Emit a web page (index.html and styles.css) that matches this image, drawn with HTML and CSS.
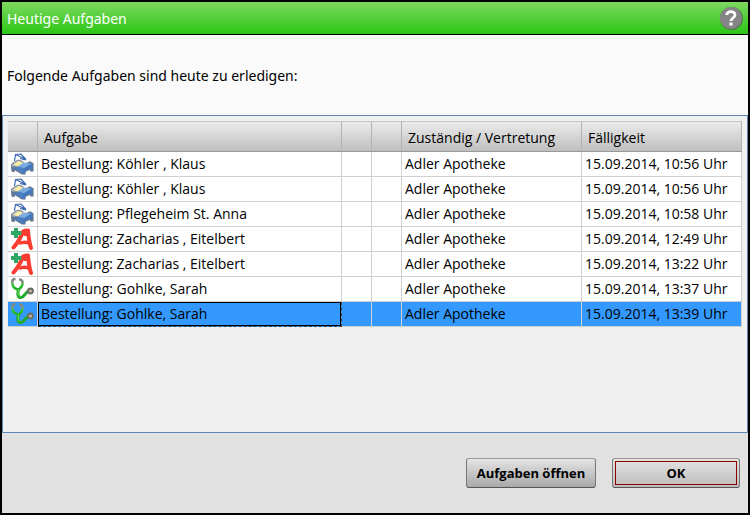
FILE: index.html
```html
<!DOCTYPE html>
<html lang="de">
<head>
<meta charset="UTF-8">
<meta name="viewport" content="width=device-width, initial-scale=1.0">
<title>Heutige Aufgaben</title>
<link rel="stylesheet" href="styles.css">
</head>
<body>
<svg class="icon-defs" aria-hidden="true">
<defs>
<linearGradient id="tube" x1="0" y1="0" x2="0" y2="1">
<stop offset="0" stop-color="#7f847f"/>
<stop offset="0.35" stop-color="#7d9a7d"/>
<stop offset="0.6" stop-color="#2fc832"/>
<stop offset="1" stop-color="#1fa82a"/>
</linearGradient>
</defs>
<symbol id="icon-bed" viewBox="0 0 24 24">
<path d="M4.500 9 5.500 2.500 11 2 16 7.500M5.500 2.500 16 7.500M10 6.500l6 1.500" fill="none" stroke="#3a68ae" stroke-width="1.200"/>
<path d="M1.500 12 8 8l5 1.500v4l-8 4-3.500-1z" fill="#aab4c0" stroke="#7d8894" stroke-width="1"/>
<path d="M3.500 12.500 8.500 9l5 2-6 3.500z" fill="#fbefa4"/>
<path d="M2 15v4l2 .5V17l8 5h3v-2.500l5.500-2.500v2H23v-7.500l-3-1.500L8 15z" fill="#4a7fc4" stroke="#687888" stroke-width="1.200"/>
<path d="M7.500 14.500 14 10.500l7 1-7 4.500z" fill="#7eabe2"/>
<path d="M13 17l9-4v3l-7 3v3h-2z" fill="#4478bd"/>
</symbol>
<symbol id="icon-pharmacy" viewBox="0 0 24 24">
<path d="M3.500 20.500C7.500 16 11 10 13 4.500c2-1 3.500-1.200 5-1 .5 6.500 1.200 12 3 17.500" fill="none" stroke="#fc3c30" stroke-width="4" stroke-linecap="round" stroke-linejoin="round"/>
<path d="M9 16.500c3-1.500 7-1.500 9.500-.5" fill="none" stroke="#fc3c30" stroke-width="3.500"/>
<path d="M13.500 4h4v5h-4z" fill="#fc3c30"/>
<path d="M4 1h4v3h3.500v4H8v3H4V8H1V4h3z" fill="#2fa866"/>
</symbol>
<symbol id="icon-stethoscope" viewBox="0 0 24 24">
<path d="M5.500 2C2 2 2 4 2.500 7c.5 3 2.500 5 6 5.500 3-2 4.500-4.500 4-7.500-.3-2-1.500-2.500-3.500-2.500" fill="none" stroke="url(#tube)" stroke-width="2.600"/>
<path d="M8.500 12c-1 5-1 8.500 2.500 8.500S15 14.500 20 13.500" fill="none" stroke="#22a92c" stroke-width="3.200"/>
<path d="M8.500 12c-.8 4-.5 7.500 2 7.500" fill="none" stroke="#5ada55" stroke-width="1.200"/>
<circle cx="20.500" cy="14" r="2.500" fill="#b8b4a6" stroke="#6a6d66" stroke-width="1.800"/>
</symbol>
</svg>
<div class="dialog">
<header class="titlebar">
<h1>Heutige Aufgaben</h1>
<button type="button" class="help" aria-label="Hilfe">
<svg viewBox="0 0 24 24" aria-hidden="true">
<circle cx="12.500" cy="12.500" r="11.500" fill="#4f7a45"/>
<circle cx="12" cy="12" r="11" fill="#858585"/>
<path d="M7.800 9C7.800 4.500 16 4.500 16 9c0 3-4 3-4 6" fill="none" stroke="#fff" stroke-width="2.800"/>
<path d="M10.500 16.500h3v3h-3z" fill="#fff"/>
</svg>
</button>
</header>
<p class="intro">Folgende Aufgaben sind heute zu erledigen:</p>
<main class="panel">
<table>
<colgroup>
<col class="col-icon">
<col>
<col class="col-flag">
<col class="col-flag">
<col class="col-owner">
<col class="col-due">
</colgroup>
<thead>
<tr><th></th><th>Aufgabe</th><th></th><th></th><th>Zuständig / Vertretung</th><th>Fälligkeit</th></tr>
</thead>
<tbody>
<tr>
<td class="icon"><svg><use href="#icon-bed"/></svg></td>
<td>Bestellung: Köhler , Klaus</td><td></td><td></td>
<td>Adler Apotheke</td><td>15.09.2014, 10:56 Uhr</td>
</tr>
<tr>
<td class="icon"><svg><use href="#icon-bed"/></svg></td>
<td>Bestellung: Köhler , Klaus</td><td></td><td></td>
<td>Adler Apotheke</td><td>15.09.2014, 10:56 Uhr</td>
</tr>
<tr>
<td class="icon"><svg><use href="#icon-bed"/></svg></td>
<td>Bestellung: Pflegeheim St. Anna</td><td></td><td></td>
<td>Adler Apotheke</td><td>15.09.2014, 10:58 Uhr</td>
</tr>
<tr>
<td class="icon"><svg><use href="#icon-pharmacy"/></svg></td>
<td>Bestellung: Zacharias , Eitelbert</td><td></td><td></td>
<td>Adler Apotheke</td><td>15.09.2014, 12:49 Uhr</td>
</tr>
<tr>
<td class="icon"><svg><use href="#icon-pharmacy"/></svg></td>
<td>Bestellung: Zacharias , Eitelbert</td><td></td><td></td>
<td>Adler Apotheke</td><td>15.09.2014, 13:22 Uhr</td>
</tr>
<tr>
<td class="icon"><svg><use href="#icon-stethoscope"/></svg></td>
<td>Bestellung: Gohlke, Sarah</td><td></td><td></td>
<td>Adler Apotheke</td><td>15.09.2014, 13:37 Uhr</td>
</tr>
<tr class="selected">
<td class="icon"><svg><use href="#icon-stethoscope"/></svg></td>
<td class="focused">Bestellung: Gohlke, Sarah</td><td></td><td></td>
<td>Adler Apotheke</td><td>15.09.2014, 13:39 Uhr</td>
</tr>
</tbody>
</table>
</main>
<footer class="actions">
<button type="button" class="btn">Aufgaben öffnen</button>
<button type="button" class="btn btn-default">OK</button>
</footer>
</div>
</body>
</html>
```
FILE: styles.css
```css
* {
box-sizing: border-box;
}
body {
margin: 0;
font-family: "Open Sans", "Noto Sans", sans-serif;
font-size: 14px;
line-height: 20px;
color: #000;
}
.icon-defs {
position: absolute;
width: 0;
height: 0;
}
.dialog {
display: flex;
flex-direction: column;
min-height: 100vh;
border: 2px solid #000;
background: #e1e1e1;
}
.titlebar {
display: flex;
align-items: center;
justify-content: space-between;
height: 33px;
padding: 0 5px;
border-bottom: 1px solid #000;
background: linear-gradient(#7ed860, #2bc615);
}
h1 {
margin: 0;
padding-top: 2px;
font-family: "Noto Sans", sans-serif;
font-size: 14px;
font-weight: normal;
color: #fff;
}
.help {
width: 24px;
height: 24px;
padding: 0;
border: 0;
background: none;
}
.help svg {
display: block;
width: 24px;
height: 24px;
}
.intro {
margin: 0;
padding: 31px 5px 29px;
background: #fafafa;
font-family: "Noto Sans", sans-serif;
}
.panel {
flex: 1;
padding: 5px;
border: 1px solid #5f87b5;
background: #f0f0f0;
}
table {
width: 100%;
table-layout: fixed;
border-collapse: separate;
border-spacing: 0;
}
.col-icon,
.col-flag {
width: 30px;
}
.col-owner {
width: 180px;
}
.col-due {
width: 160px;
}
th {
height: 31px;
padding: 3px 6px 0;
border: 1px solid #c6c6c6;
border-left: 0;
border-right-color: #b2b2b2;
border-bottom-color: #999;
background: linear-gradient(#ebebeb, #bfbfbf);
font-weight: normal;
text-align: left;
white-space: nowrap;
}
td {
height: 25px;
padding: 0 3px;
border-right: 1px solid #d0d0d0;
border-bottom: 1px solid #d0d0d0;
background: #fff;
white-space: nowrap;
}
td.icon {
padding: 0 2px;
}
td.icon svg {
display: block;
width: 24px;
height: 24px;
}
.selected td {
background: #3399ff;
}
.selected .focused {
border-right: 1px dashed #444;
border-bottom: 1px dashed #444;
box-shadow: inset 0 0 0 1px #000;
}
.actions {
display: flex;
justify-content: flex-end;
gap: 16px;
padding: 25px 8px;
}
.btn {
width: 130px;
height: 30px;
padding: 0;
border: 1px solid #777;
border-top-color: #999;
border-bottom-color: #555;
border-radius: 3px;
background: linear-gradient(#e4e4e4, #a9a9a9);
font-family: inherit;
font-size: 13px;
font-weight: bold;
color: #000;
}
.btn-default {
width: 128px;
background: linear-gradient(#e4e4e4, #bcbcbc);
outline: 1px solid #8b0000;
outline-offset: -4px;
}
```
